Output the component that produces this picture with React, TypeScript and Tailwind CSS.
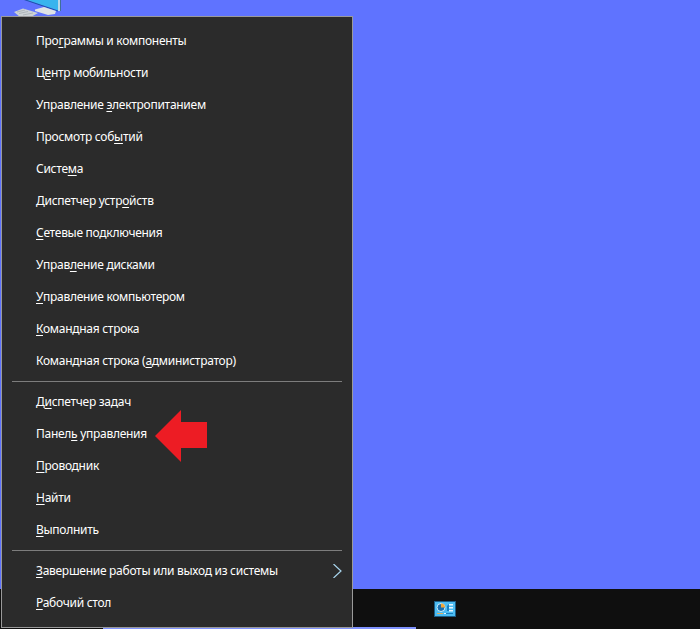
import React from "react";

type Item = { before: string; key_: string; after: string };

const item = (before: string, key_: string, after: string): Item => ({ before, key_, after });

const groupOne: Item[] = [
  item("Про", "г", "раммы и компоненты"),
  item("Ц", "е", "нтр мобильности"),
  item("Управление ", "э", "лектропитанием"),
  item("Просмотр соб", "ы", "тий"),
  item("Систе", "м", "а"),
  item("Диспетчер устр", "о", "йств"),
  item("", "С", "етевые подключения"),
  item("Управ", "л", "ение дисками"),
  item("", "У", "правление компьютером"),
  item("", "К", "омандная строка"),
  item("Командная строка (", "а", "дминистратор)"),
];

const groupTwo: Item[] = [
  item("Д", "и", "спетчер задач"),
  item("Панел", "ь", " управления"),
  item("", "П", "роводник"),
  item("", "Н", "айти"),
  item("", "В", "ыполнить"),
];

const MenuRow = ({ row, arrow }: { row: Item; arrow?: boolean }) => (
  <div className="flex h-8 items-center justify-between pl-[34px] pr-[10px]">
    <span className="whitespace-pre">
      {row.before}
      <span className="underline decoration-1 underline-offset-2">{row.key_}</span>
      {row.after}
    </span>
    {arrow && (
      <svg width="9" height="14" viewBox="0 0 9 14" fill="none">
        <path d="M0.5 0L8 7L0.5 14" stroke="#a8d4ec" strokeWidth="1.2" />
      </svg>
    )}
  </div>
);

const Separator = () => <div className="mx-[10px] my-1 h-px bg-[#7d7d7d]" />;

const DesktopIcon = () => (
  <svg className="absolute left-0 top-0" width="70" height="17" viewBox="0 0 70 17">
    <path d="M27 0H58V10.5Z" fill="#38b4ee" />
    <path d="M27 0L58 10.5V11.5L24 0Z" fill="#1c4fa8" />
    <rect x="58" y="0" width="2" height="11" fill="#b8d8e8" />
    <rect x="60" y="0" width="1" height="11" fill="#3f6f9a" />
    <path d="M35 9.5L44 7L56 11L55 14L48 15L35 11Z" fill="#dfe3e6" />
    <path d="M14 12L23 8.5L38 13L31 17H20Z" fill="#ccd2d6" />
    <path d="M17 12L25 10M19 13.5L28 11.5M23 15L33 13" stroke="#aeb5ba" strokeWidth="1" />
  </svg>
);

const PanelIcon = () => (
  <svg width="22" height="16" viewBox="0 0 22 16">
    <rect x="0" y="0" width="22" height="16" fill="#4cbcf2" />
    <rect x="0.5" y="0.5" width="21" height="15" fill="none" stroke="#1b5c86" strokeWidth="1" />
    <circle cx="7" cy="6.5" r="4" fill="#1a6fb0" stroke="#cfeefb" strokeWidth="1" />
    <path d="M7 6.5V2.5A4 4 0 0 1 11 6.5Z" fill="#f2a63a" />
    <rect x="15" y="3" width="4" height="1.5" fill="#e8f7ff" />
    <rect x="15" y="6" width="4" height="1.5" fill="#e8f7ff" />
    <rect x="15" y="9" width="4" height="1.5" fill="#e8f7ff" />
    <path d="M13 5L15 3V10L13 10Z" fill="#1a7fc0" />
    <rect x="3" y="12" width="6" height="1" fill="#e0b060" />
    <rect x="10" y="12" width="2" height="1" fill="#e8f7ff" />
    <rect x="12" y="12" width="7" height="1" fill="#1a7fc0" />
  </svg>
);

const App = () => {
  return (
    <div className="relative flex h-[629px] w-[700px] flex-col overflow-hidden bg-[#5f73ff] font-['Noto_Sans',sans-serif] text-[12px] tracking-[-0.28px] text-white">
      <DesktopIcon />
      <div className="flex-1" />
      <div className="relative flex h-10 bg-[#0f0f0f] pl-[434px] pt-3">
        <PanelIcon />
        <div className="absolute bottom-0 left-[103px] h-[2px] w-[313px] bg-[#8093ff]" />
      </div>

      <div className="absolute left-px top-4 h-[612px] w-[352px] border border-[#9a9a9a] bg-[#2b2b2b] py-2">
        {groupOne.map((row) => (
          <MenuRow key={row.before + row.after} row={row} />
        ))}
        <Separator />
        {groupTwo.map((row) => (
          <MenuRow key={row.before + row.after} row={row} />
        ))}
        <Separator />
        <MenuRow row={item("", "З", "авершение работы или выход из системы")} arrow />
        <MenuRow row={item("", "Р", "абочий стол")} />
      </div>

      <svg className="absolute left-[155px] top-[410px]" width="52" height="52" viewBox="0 0 52 52">
        <path d="M0 26L26 0V12H52V38H26V52Z" fill="#ed1c24" />
      </svg>
    </div>
  );
};

export default App;
